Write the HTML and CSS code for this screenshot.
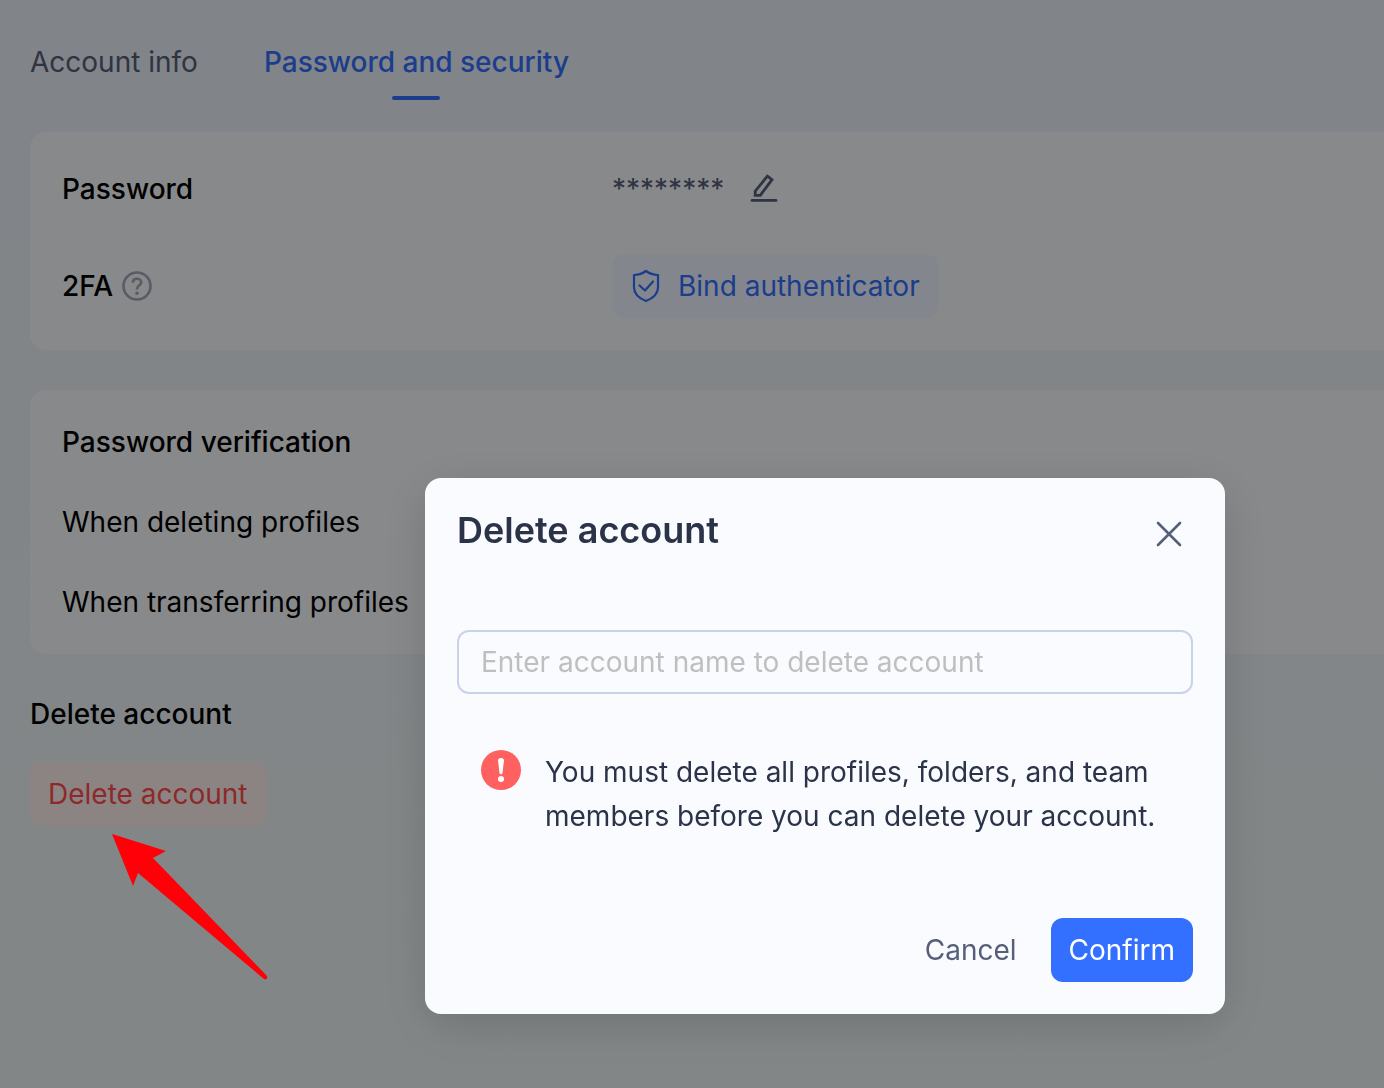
FILE: index.html
```
<!DOCTYPE html>
<html lang="en">
<head>
    <meta charset="UTF-8">
    <meta name="viewport" content="width=device-width, initial-scale=1.0">
    <title>Password and security</title>
    <link rel="stylesheet" href="styles.css">
</head>
<body>
    <main class="page">
        <nav class="tabs">
            <a class="tab" href="#info">Account info</a>
            <a class="tab active" href="#security">Password and security</a>
        </nav>

        <section class="card">
            <div class="row password-row">
                <span class="label strong">Password</span>
                <span class="stars">********</span>
                <button class="icon-btn" type="button" aria-label="Edit password">
                    <svg width="32" height="32" viewBox="0 0 32 32" fill="none" stroke="currentColor" stroke-width="2.8">
                        <path d="M19.4 3.2L24 6.7L12.3 22.3H7.2V18.2Z"/>
                        <path d="M4 27.4H28" stroke-linecap="round"/>
                    </svg>
                </button>
            </div>
            <div class="row">
                <span class="label strong">2FA
                    <svg class="help" width="32" height="32" viewBox="0 0 32 32" fill="none" stroke="currentColor" stroke-width="2.6">
                        <circle cx="16" cy="16" r="13.5"/>
                        <path d="M11.8 12.8C11.8 10.3 13.6 8.8 16 8.8C18.4 8.8 20.2 10.3 20.2 12.5C20.2 15.2 16 15.6 16 18.8V19.4"/>
                        <circle cx="16" cy="23.3" r="1.8" fill="currentColor" stroke="none"/>
                    </svg>
                </span>
                <button class="btn btn-bind" type="button">
                    <svg width="32" height="36" viewBox="0 0 32 36" fill="none" stroke="currentColor" stroke-width="2.2">
                        <path d="M16 3C12.5 5.6 8 6.8 4 7V19.5C4 25.5 8.5 30 16 33C23.5 30 28 25.5 28 19.5V7C24 6.8 19.5 5.6 16 3Z" stroke-linejoin="round"/>
                        <path d="M9.5 17.5L15 22.5L23 13.5" stroke-linecap="round" stroke-linejoin="round"/>
                    </svg>
                    Bind authenticator
                </button>
            </div>
        </section>

        <section class="card">
            <div class="row strong">Password verification</div>
            <div class="row">When deleting profiles</div>
            <div class="row">When transferring profiles</div>
        </section>

        <section class="danger">
            <h2>Delete account</h2>
            <button class="btn btn-danger" type="button">Delete account</button>
            <svg class="arrow" width="158" height="148" viewBox="0 0 158 148">
                <path d="M0 0L54 17L41 24L155 142Q156 146 152 145L26 39L21 52Z" fill="#ff0008"/>
            </svg>
        </section>
    </main>

    <div class="overlay">
        <div class="modal" role="dialog" aria-labelledby="modal-title">
            <div class="modal-header">
                <h1 id="modal-title">Delete account</h1>
                <button class="icon-btn close" type="button" aria-label="Close">
                    <svg width="32" height="32" viewBox="0 0 32 32" fill="none" stroke="currentColor" stroke-width="2.6" stroke-linecap="round">
                        <path d="M5 5L27 27M27 5L5 27"/>
                    </svg>
                </button>
            </div>
            <input class="name-input" type="text" aria-label="Account name" placeholder="Enter account name to delete account">
            <div class="notice">
                <svg width="40" height="40" viewBox="0 0 40 40">
                    <circle cx="20" cy="20" r="20" fill="#ff6060"/>
                    <path d="M17 10.5Q17 8 20 8Q23 8 23 10.5L21.5 23Q21.3 24.3 20 24.3Q18.7 24.3 18.5 23Z" fill="#fff"/>
                    <circle cx="20" cy="29" r="3" fill="#fff"/>
                </svg>
                <p>You must delete all profiles, folders, and team members before you can delete your account.</p>
            </div>
            <div class="modal-footer">
                <button class="btn btn-cancel" type="button">Cancel</button>
                <button class="btn btn-confirm" type="button">Confirm</button>
            </div>
        </div>
    </div>
</body>
</html>
```
FILE: styles.css
```
* {
    box-sizing: border-box;
}
body {
    margin: 0;
    min-height: 100vh;
    font-family: Inter, "Liberation Sans", sans-serif;
    font-size: 28px;
    line-height: 40px;
    color: #000;
    background: linear-gradient(#ebf0f7, #edf4f7 60%, #eef5f5);
}
h1, h2, p {
    margin: 0;
}
button {
    font: inherit;
    border: 0;
    background: none;
    cursor: pointer;
}
.page {
    padding: 42px 0 0 30px;
}
.tabs {
    display: flex;
    gap: 66px;
    margin-bottom: 32px;
}
.tab {
    color: #565f7a;
    text-decoration: none;
    height: 58px;
}
.tab.active {
    color: #3370ff;
    font-weight: 500;
}
.tab.active::after {
    content: "";
    display: block;
    width: 48px;
    height: 4px;
    margin: 14px auto 0;
    border-radius: 2px;
    background: #3370ff;
}
.card {
    display: flex;
    flex-direction: column;
    gap: 40px;
    padding: 32px;
    margin-bottom: 40px;
    border-radius: 16px 0 0 16px;
    background: #f8f9fb;
}
.row {
    display: flex;
    align-items: center;
}
.password-row {
    height: 50px;
}
.strong {
    font-weight: 500;
}
.label {
    display: flex;
    align-items: center;
    gap: 8px;
    width: 550px;
}
.help {
    color: #a3a7b8;
}
.stars {
    color: #565f7a;
    margin-right: 24px;
}
.icon-btn {
    display: flex;
    padding: 0;
    color: #565f7a;
}
.btn {
    display: flex;
    align-items: center;
    height: 64px;
    padding: 0 18px;
    border-radius: 12px;
}
.btn-bind {
    gap: 16px;
    color: #3370ff;
    background: #eff5ff;
}
.danger {
    position: relative;
}
.danger h2 {
    font-size: 28px;
    font-weight: 500;
    margin-bottom: 28px;
}
.btn-danger {
    color: #ff4d4f;
    background: #fff0ee;
}
/* pointer stays above the dimmed page */
.arrow {
    position: absolute;
    left: 82px;
    top: 140px;
    z-index: 20;
}
.overlay {
    position: fixed;
    inset: 0;
    z-index: 10;
    display: flex;
    justify-content: center;
    align-items: flex-start;
    padding: 478px 0 0 266px;
    background: rgba(0, 0, 0, 0.45);
}
.modal {
    width: 800px;
    max-width: 100%;
    padding: 32px;
    border-radius: 16px;
    background: #f9fbff;
    color: #2b3349;
    box-shadow: 0 12px 48px rgba(0, 0, 0, 0.15);
}
.modal-header {
    display: flex;
    justify-content: space-between;
    height: 48px;
    padding-right: 8px;
    margin-bottom: 72px;
}
.modal-header h1 {
    font-size: 36px;
    font-weight: 600;
    line-height: 40px;
}
.close {
    align-items: center;
}
.name-input {
    display: block;
    width: 100%;
    height: 64px;
    padding: 0 22px;
    border: 2px solid #c9d3e8;
    border-radius: 12px;
    background: transparent;
    color: #2b3349;
    font: inherit;
}
.name-input::placeholder {
    color: #bfbfbf;
}
.notice {
    display: flex;
    gap: 24px;
    margin: 56px 24px 80px;
    line-height: 44px;
}
.notice svg {
    flex-shrink: 0;
}
.modal-footer {
    display: flex;
    justify-content: flex-end;
    gap: 16px;
}
.btn-cancel {
    color: #565f7a;
}
.btn-confirm {
    color: #fff;
    background: #3370ff;
}
```
